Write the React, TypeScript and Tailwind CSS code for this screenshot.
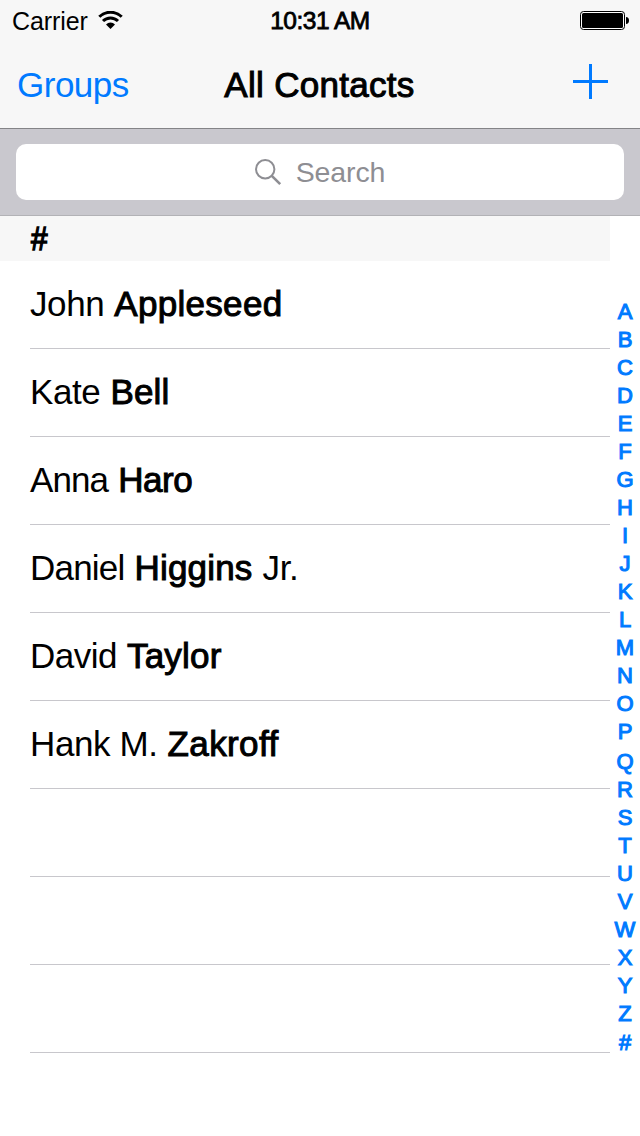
import clsx from "clsx";

type Contact = {
  first: string;
  last: string;
  suffix?: string;
  firstClass?: string;
  lastClass?: string;
};

const contacts: Contact[] = [
  { first: "John", last: "Appleseed", lastClass: "tracking-[0.3px]" },
  { first: "Kate", last: "Bell" },
  { first: "Anna", last: "Haro", firstClass: "tracking-[-0.9px]", lastClass: "tracking-[-0.4px]" },
  { first: "Daniel", last: "Higgins", suffix: "Jr.", firstClass: "tracking-[-0.8px]" },
  { first: "David", last: "Taylor", firstClass: "tracking-[-0.5px]" },
  { first: "Hank M.", last: "Zakroff", lastClass: "tracking-[0.4px]" },
];

const EMPTY_ROWS = 3;

const letters = "ABCDEFGHIJKLMNOPQRSTUVWXYZ#".split("");

// Liberation Sans has no medium weight, a thin stroke stands in for it
const medium = "[-webkit-text-stroke:1px_currentColor]";

function WifiIcon() {
  return (
    <svg width="25" height="18" viewBox="0 0 25 18" fill="none" className="mb-px ml-[10px]">
      <path d="M1.3 5.8 A16 16 0 0 1 23.7 5.8" stroke="black" strokeWidth="3" />
      <path d="M5 10 A10.6 10.6 0 0 1 20 10" stroke="black" strokeWidth="3" />
      <path d="M8 13.4 A6.2 6.2 0 0 1 17 13.4 L12.5 18 Z" fill="black" />
    </svg>
  );
}

function BatteryIcon() {
  return (
    <svg width="50" height="19" viewBox="0 0 50 19">
      <rect x="0.5" y="0.5" width="44" height="18" rx="3" fill="white" stroke="black" />
      <rect x="2" y="2" width="41" height="15" rx="1.5" fill="black" />
      <path d="M46 6 C48 6 49 7.5 49 9.5 C49 11.5 48 13 46 13 Z" fill="black" />
    </svg>
  );
}

function StatusBar() {
  return (
    <div className="grid h-10 grid-cols-3 items-center pr-[10px] pl-3 text-[25px] leading-10">
      <div className="flex items-center">
        <span className="pt-px tracking-[-0.1px]">Carrier</span>
        <WifiIcon />
      </div>
      <span className="pt-px pr-[2px] text-center text-[24.5px] tracking-[-0.5px] whitespace-nowrap [-webkit-text-stroke:0.8px_currentColor]">
        10:31 AM
      </span>
      <div className="flex justify-end">
        <BatteryIcon />
      </div>
    </div>
  );
}

function NavBar() {
  return (
    <div className="grid h-[88px] grid-cols-[1fr_auto_1fr] items-center px-[17px] text-[35px]">
      <button className="pt-[2px] text-left tracking-[-0.5px] text-[#007aff]">Groups</button>
      <h1 className={clsx("pt-[2px] pr-px tracking-[0.3px]", medium)}>All Contacts</h1>
      <button className="flex justify-end pr-[15px] pb-[5px]" aria-label="Add">
        <svg width="35" height="35" viewBox="0 0 35 35" fill="#007aff">
          <rect x="16" width="3" height="35" />
          <rect y="16" width="35" height="3" />
        </svg>
      </button>
    </div>
  );
}

function SearchBar() {
  return (
    <div className="border-b border-[#b2b2b6] bg-[#c9c8ce] px-4 pt-[15px] pb-[15px]">
      <div className="flex h-14 items-center justify-center rounded-[10px] bg-white text-[#8e8e93]">
        <svg width="27" height="27" viewBox="0 0 27 27" fill="none" stroke="currentColor">
          <circle cx="10.2" cy="10.2" r="9.2" strokeWidth="2" />
          <path d="M16.8 16.8 L25.2 25.2" strokeWidth="2.6" />
        </svg>
        <span className="ml-[14px] text-[28.5px] tracking-[-0.1px]">Search</span>
      </div>
    </div>
  );
}

function ContactRow({ contact }: { contact?: Contact }) {
  return (
    <li className="ml-[30px] flex h-[88px] items-center gap-[10px] border-b border-[#c8c7cc] text-[35px]">
      {contact && (
        <>
          <span className={contact.firstClass ?? "tracking-[-0.4px]"}>{contact.first}</span>
          <span className={clsx(contact.lastClass ?? "tracking-[0.2px]", medium)}>{contact.last}</span>
          {contact.suffix && <span className="tracking-[-0.4px]">{contact.suffix}</span>}
        </>
      )}
    </li>
  );
}

function LetterIndex() {
  return (
    <nav className="flex w-[30px] flex-col items-center pt-[82px] text-[22px] text-[#007aff]">
      {letters.map((letter) => (
        <span
          key={letter}
          className={clsx(
            "h-7 leading-7 [-webkit-text-stroke:1.1px_currentColor]",
            letter === "Q" && "mt-[2px]",
            letter === "#" && "mt-px"
          )}
        >
          {letter}
        </span>
      ))}
    </nav>
  );
}

export default function App() {
  return (
    <div className="flex h-[1136px] w-[640px] flex-col overflow-hidden bg-white font-['Liberation_Sans',Arial,sans-serif] text-black">
      <header className="border-b border-[#848487] bg-[#f7f7f7]">
        <StatusBar />
        <NavBar />
      </header>
      <SearchBar />
      <div className="flex flex-1">
        <section className="w-[610px]">
          <h2 className="h-[45px] bg-[#f7f7f7] pl-[31px] text-[33px] leading-[45px]">
            <span className="inline-block origin-left scale-x-90 [-webkit-text-stroke:1.4px_currentColor]">#</span>
          </h2>
          <ul>
            {contacts.map((contact) => (
              <ContactRow key={contact.last} contact={contact} />
            ))}
            {Array.from({ length: EMPTY_ROWS }, (_, i) => (
              <ContactRow key={i} />
            ))}
          </ul>
        </section>
        <LetterIndex />
      </div>
    </div>
  );
}
